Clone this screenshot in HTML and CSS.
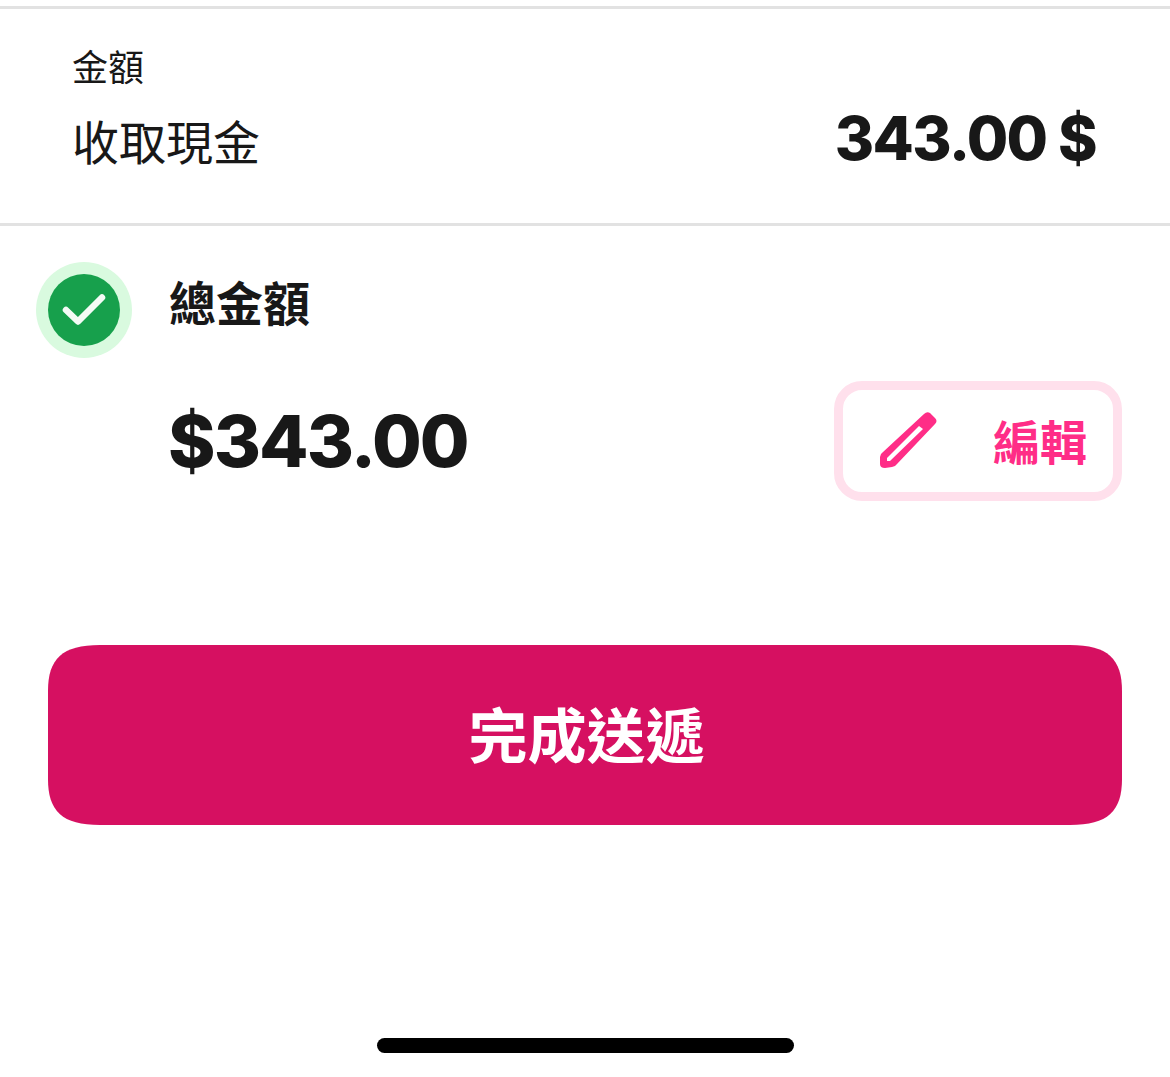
FILE: index.html
```html
<!DOCTYPE html>
<html lang="zh-Hant">
<head>
<meta charset="utf-8">
<title>完成送遞</title>
<link rel="stylesheet" href="styles.css">
</head>
<body>
<main class="page">
  <section class="cash">
    <div class="cash-labels">
      <div class="cash-caption">金額</div>
      <div class="cash-method">收取現金</div>
    </div>
    <div class="cash-value">343.00 $</div>
  </section>
  <section class="total">
    <div class="total-head">
      <span class="status">
        <svg class="status-icon" viewBox="0 0 72 72" aria-hidden="true">
          <circle cx="36" cy="36" r="36" fill="#17a04c"/>
          <path d="M18 36 L30 47.5 L54 23.5" fill="none" stroke="#f4fbf6" stroke-width="6.5" stroke-linecap="round" stroke-linejoin="round"/>
        </svg>
      </span>
      <span class="total-title">總金額</span>
    </div>
    <div class="total-body">
      <span class="total-value">$343.00</span>
      <button class="edit" type="button">
        <svg class="edit-icon" viewBox="0 0 58 58" aria-hidden="true">
          <path fill-rule="evenodd" d="M44 2 Q47 -1 50 1 L55 6 Q58 9 55 12 L17 52 Q15 55 12 55 L5 56 Q0 56 0 52 L0 45 Q0 42 3 40 Z M39 14 L7 46 L7 49 L10 49 L43 17 Z" fill="#ff2d87"/>
        </svg>
        <span class="edit-label">編輯</span>
      </button>
    </div>
  </section>
  <button class="cta" type="button">完成送遞</button>
  <div class="home-bar"></div>
</main>
</body>
</html>
```
FILE: styles.css
```css
* { box-sizing: border-box; }
html, body { margin: 0; padding: 0; background: #fff; }
body {
  width: 1170px;
  height: 1077px;
  overflow: hidden;
  color: #181818;
  font-family: Inter, "Noto Sans CJK TC", sans-serif;
}
.page {
  display: flex;
  flex-direction: column;
  height: 1077px;
  padding-top: 6px;
}
.cash {
  height: 220px;
  border-top: 3px solid #e2e2e2;
  border-bottom: 3px solid #e2e2e2;
  padding: 32px 74px 0 72px;
  display: flex;
  justify-content: space-between;
  align-items: flex-start;
}
.cash-labels { display: flex; flex-direction: column; }
.cash-caption {
  font-family: "Noto Sans CJK TC", sans-serif;
  font-size: 36px;
  line-height: 48px;
  font-weight: 400;
}
.cash-method {
  font-family: "Noto Sans CJK TC", sans-serif;
  font-size: 47px;
  line-height: 68px;
  margin-top: 17px;
  font-weight: 400;
}
.cash-value {
  font-size: 60px;
  line-height: 72px;
  font-weight: 800;
  margin-top: 61px;
  letter-spacing: -1.6px;
}
.total { padding: 36px 48px 0 36px; }
.total-head { display: flex; align-items: center; gap: 37px; }
.status {
  width: 96px;
  height: 96px;
  border-radius: 50%;
  background: #d9fadf;
  display: flex;
  align-items: center;
  justify-content: center;
}
.status-icon { width: 72px; height: 72px; display: block; }
.total-title {
  font-family: "Noto Sans CJK TC", sans-serif;
  font-size: 47px;
  font-weight: 700;
  line-height: 66px;
  margin-top: -18px;
}
.total-body {
  display: flex;
  justify-content: space-between;
  align-items: center;
  padding-left: 132px;
  margin-top: 23px;
}
.total-value {
  font-size: 72px;
  line-height: 88px;
  font-weight: 800;
  letter-spacing: -1.9px;
}
.edit {
  width: 288px;
  height: 120px;
  border: 9px solid #ffe0ec;
  border-radius: 28px;
  background: #fff;
  padding: 0 26px 0 37px;
  display: flex;
  align-items: center;
  justify-content: space-between;
}
.edit-icon { width: 58px; height: 58px; display: block; }
.edit-label {
  font-family: "Noto Sans CJK TC", sans-serif;
  font-size: 47px;
  font-weight: 700;
  color: #ff2d87;
  line-height: 66px;
  margin-top: -3px;
}
.cta {
  display: block;
  width: 1074px;
  height: 180px;
  margin: 144px 0 0 48px;
  border: 0;
  background: #d61061;
  clip-path: path("M52 0 L1022 0 C1060 0 1074 14 1074 46 L1074 134 C1074 166 1060 180 1022 180 L52 180 C14 180 0 166 0 134 L0 46 C0 14 14 0 52 0 Z");
  color: #fff;
  font-family: "Noto Sans CJK TC", sans-serif;
  font-size: 59px;
  font-weight: 700;
  padding: 0 0 6px 3px;
}
.home-bar {
  width: 417px;
  height: 15px;
  margin: 213px 0 0 377px;
  border-radius: 8px;
  background: #000;
}
```
